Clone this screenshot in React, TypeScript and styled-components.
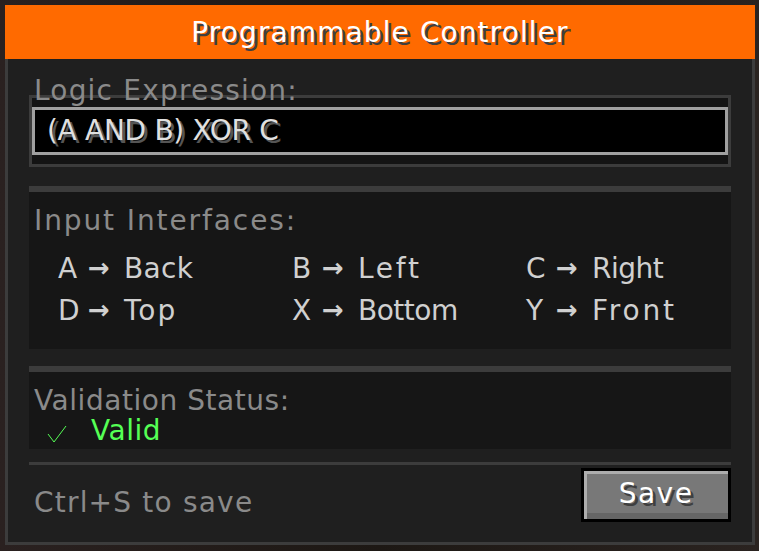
import React from "react";
import styled, { createGlobalStyle } from "styled-components";

const Global = createGlobalStyle`
  html, body { margin: 0; padding: 0; }
  body {
    width: 759px; height: 551px; overflow: hidden;
    background: linear-gradient(90deg, #2a2120, #1d1814 50%, #2a2320);
    font-family: "DejaVu Sans", "Liberation Sans", sans-serif;
  }
`;

const Window = styled.main`
  box-sizing: border-box;
  width: 750px; height: 540px;
  margin: 5px 0 0 5px;
  background: #1f1f1f;
  border: 3px solid #3c3c3c;
  border-top: 0;
  display: flex; flex-direction: column;
`;

const TitleBar = styled.header`
  height: 54px; margin: 0 -3px;
  background: #ff6a00;
  display: flex; align-items: center; justify-content: center;
  color: #fff; font-size: 28px; letter-spacing: 1.1px;
  text-shadow: 3px 3px 0 #3f3f3f;
`;

const Content = styled.div`
  padding: 0 21px;
  display: flex; flex-direction: column; flex: 1;
`;

const Label = styled.div<{ $spacing: number }>`
  color: #8a8a8a; font-size: 28px; line-height: 30px;
  letter-spacing: ${p => p.$spacing}px;
  padding-left: 5px;
`;

const ExpressionLabel = styled(Label)`
  position: relative; z-index: 1;
  margin: 17px 0 -11px;
`;

const ExpressionBox = styled.div`
  height: 72px; box-sizing: border-box;
  border: 3px solid #3c3c3c;
  background: #141414;
  padding: 9px 0;
`;

const ExpressionInput = styled.div`
  height: 48px; box-sizing: border-box;
  border: 3px solid #a0a0a0;
  background: #000;
  color: #e0e0e0; font-size: 28px; line-height: 42px;
  letter-spacing: -0.3px; padding-left: 12px;
  text-shadow: 3px 3px 0 #555;
`;

const Divider = styled.div<{ $size: number; $gap: number }>`
  height: ${p => p.$size}px;
  margin-top: ${p => p.$gap}px;
  background: #3c3c3c;
`;

const Panel = styled.section<{ $height: number }>`
  height: ${p => p.$height}px;
  background: #161616;
  box-sizing: border-box;
`;

const InterfacesLabel = styled(Label)`
  padding-top: 14px;
`;

const InterfaceGrid = styled.div`
  display: grid;
  grid-template-columns: repeat(3, 234px);
  grid-auto-rows: 42px;
  padding: 11px 0 0 29px;
`;

const Mapping = styled.div`
  display: flex; align-items: center;
  color: #d0d0d0; font-size: 28px;
`;

const Port = styled.span`
  width: 30px;
`;

const Arrow = styled.span`
  width: 36px;
  font-size: 26px;
  font-weight: bold;
`;

const Side = styled.span<{ $spacing: number }>`
  letter-spacing: ${p => p.$spacing}px;
`;

const StatusLabel = styled(Label)`
  padding-top: 14px;
`;

const StatusRow = styled.div`
  display: flex; align-items: center;
  padding: 0 0 0 18px;
  height: 29px;
  color: #55ff55; font-size: 28px; letter-spacing: 0.5px;
`;

const Check = styled.svg`
  width: 20px; height: 18px; margin: 7px 24px 0 0; flex: none;
`;

const Footer = styled.footer`
  display: flex; justify-content: space-between; align-items: center;
  padding-top: 3px;
`;

const Hint = styled(Label)`
  padding-top: 16px;
`;

const SaveButton = styled.button`
  width: 150px; height: 54px; box-sizing: border-box;
  padding: 0 0 3px;
  border: 3px solid #000;
  background: #787878;
  box-shadow: inset 3px 3px 0 #adadad, inset 0 -6px 0 #666;
  color: #fff; font: 28px "DejaVu Sans", sans-serif; letter-spacing: 1.5px;
  text-shadow: 3px 3px 0 #3f3f3f;
`;

const mappings: [string, string, number][] = [
  ["A", "Back", 0.3], ["B", "Left", 2.75], ["C", "Right", -0.5],
  ["D", "Top", 2], ["X", "Bottom", -0.5], ["Y", "Front", 2.8],
];

export default function App() {
  return (
    <>
      <Global />
      <Window>
        <TitleBar>Programmable Controller</TitleBar>
        <Content>
          <ExpressionLabel $spacing={1.2}>Logic Expression:</ExpressionLabel>
          <ExpressionBox>
            <ExpressionInput>(A AND B) XOR C</ExpressionInput>
          </ExpressionBox>
          <Divider $size={6} $gap={19} />
          <Panel $height={157}>
            <InterfacesLabel $spacing={1.9}>Input Interfaces:</InterfacesLabel>
            <InterfaceGrid>
              {mappings.map(([port, side, spacing]) => (
                <Mapping key={port}>
                  <Port>{port}</Port>
                  <Arrow>→</Arrow>
                  <Side $spacing={spacing}>{side}</Side>
                </Mapping>
              ))}
            </InterfaceGrid>
          </Panel>
          <Divider $size={6} $gap={17} />
          <Panel $height={77}>
            <StatusLabel $spacing={0.55}>Validation Status:</StatusLabel>
            <StatusRow>
              <Check viewBox="0 0 20 18" fill="none" stroke="#55ff55" strokeWidth="1">
                <path d="M1 9 L7 17 L19 1" />
              </Check>
              Valid
            </StatusRow>
          </Panel>
          <Divider $size={3} $gap={13} />
          <Footer>
            <Hint $spacing={1.2}>Ctrl+S to save</Hint>
            <SaveButton>Save</SaveButton>
          </Footer>
        </Content>
      </Window>
    </>
  );
}
